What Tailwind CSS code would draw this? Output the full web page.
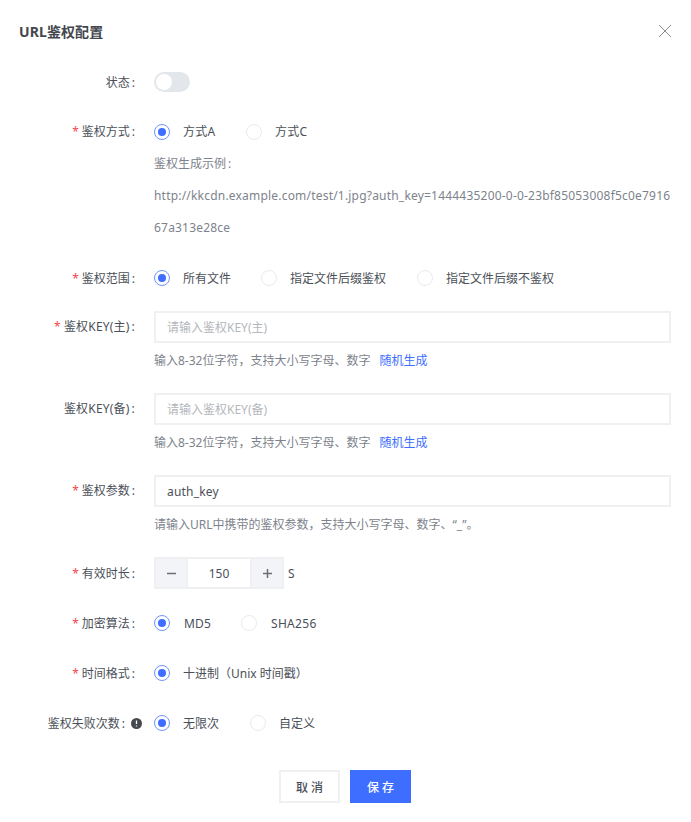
<!doctype html>
<html lang="zh-CN">
<head>
  <meta charset="UTF-8" />
  <title>URL鉴权配置</title>
  <script src="https://cdn.jsdelivr.net/npm/@tailwindcss/browser@4"></script>
</head>
<body class="bg-white">
  <main class="w-[691px] h-[822px] overflow-hidden font-['Noto_Sans','Noto_Sans_CJK_SC',sans-serif] text-[12px] text-[#4b5058]">
    <header class="h-[62px] pl-[19px] pr-[19px] flex items-center justify-between">
      <h1 class="text-[14px] font-bold text-[#43474d] tracking-[0.1px]">URL鉴权配置</h1>
      <svg class="w-[14px] h-[14px] text-[#8a8d92]" viewBox="0 0 14 14" fill="none" stroke="currentColor" stroke-width="1"><path d="M1 1l12 12M13 1L1 13" /></svg>
    </header>

    <form class="flex flex-col">
      <!-- 状态 -->
      <div class="flex items-center h-8 mt-[4px]">
        <label class="w-[135px] text-right pt-[2px]">状态<span class="ml-[2px]">:</span></label>
        <div class="ml-[19px] w-9 h-5 rounded-full bg-[#e3e6eb] p-[2px] -mt-px"><div class="w-4 h-4 rounded-full bg-white"></div></div>
      </div>

      <!-- 鉴权方式 -->
      <div class="flex items-center h-8 mt-[18px]">
        <label class="w-[135px] text-right"><span class="text-[#f0484d] mr-[3px]">*</span>鉴权方式<span class="ml-[2px]">:</span></label>
        <div class="ml-[19px] flex items-center">
          <span class="w-4 h-4 rounded-full border-[1.5px] border-[#6f93ff] flex items-center justify-center"><span class="w-2 h-2 rounded-full bg-[#3d6eff]"></span></span>
          <span class="ml-[13px] w-[63px] tracking-[0.2px]">方式A</span>
          <span class="w-4 h-4 rounded-full border-[1.5px] border-[#e8eaee]"></span>
          <span class="ml-[13px] tracking-[0.2px]">方式C</span>
        </div>
      </div>
      <div class="ml-[154px] w-[517px] text-[#7d838c] leading-8">
        <p>鉴权生成示例<span class="ml-[2px]">:</span></p>
        <p class="break-all tracking-[0.2px]">http://kkcdn.example.com/test/1.jpg?auth_key=1444435200-0-0-23bf85053008f5c0e791667a313e28ce</p>
      </div>

      <!-- 鉴权范围 -->
      <div class="flex items-center h-8 mt-[18px]">
        <label class="w-[135px] text-right pt-[2px]"><span class="text-[#f0484d] mr-[3px]">*</span>鉴权范围<span class="ml-[2px]">:</span></label>
        <div class="ml-[19px] flex items-center">
          <span class="w-4 h-4 rounded-full border-[1.5px] border-[#6f93ff] flex items-center justify-center"><span class="w-2 h-2 rounded-full bg-[#3d6eff]"></span></span>
          <span class="ml-[13px] w-[78px] pt-[2px]">所有文件</span>
          <span class="w-4 h-4 rounded-full border-[1.5px] border-[#e8eaee]"></span>
          <span class="ml-[13px] w-[127px] pt-[2px]">指定文件后缀鉴权</span>
          <span class="w-4 h-4 rounded-full border-[1.5px] border-[#e8eaee]"></span>
          <span class="ml-[13px] pt-[2px]">指定文件后缀不鉴权</span>
        </div>
      </div>

      <!-- 鉴权KEY(主) -->
      <div class="flex items-center h-8 mt-[17px]">
        <label class="w-[135px] text-right tracking-[0.2px]"><span class="text-[#f0484d] mr-[3px]">*</span>鉴权KEY(主)<span class="ml-[2px]">:</span></label>
        <input class="ml-[19px] w-[517px] h-8 px-[11px] border-2 border-[#eff0f2] outline-none placeholder:text-[#b4b7bc]" placeholder="请输入鉴权KEY(主)" />
      </div>
      <p class="ml-[154px] pt-[2px] leading-[31px] text-[#7d838c]">输入8-32位字符&#65292;支持大小写字母、数字<a class="ml-[9px] text-[#3d6eff]">随机生成</a></p>

      <!-- 鉴权KEY(备) -->
      <div class="flex items-center h-8 mt-[17px]">
        <label class="w-[135px] text-right tracking-[0.2px]">鉴权KEY(备)<span class="ml-[2px]">:</span></label>
        <input class="ml-[19px] w-[517px] h-8 px-[11px] border-2 border-[#eff0f2] outline-none placeholder:text-[#b4b7bc]" placeholder="请输入鉴权KEY(备)" />
      </div>
      <p class="ml-[154px] pt-[2px] leading-[31px] text-[#7d838c]">输入8-32位字符&#65292;支持大小写字母、数字<a class="ml-[9px] text-[#3d6eff]">随机生成</a></p>

      <!-- 鉴权参数 -->
      <div class="flex items-center h-8 mt-[17px]">
        <label class="w-[135px] text-right"><span class="text-[#f0484d] mr-[3px]">*</span>鉴权参数<span class="ml-[2px]">:</span></label>
        <input class="ml-[19px] w-[517px] h-8 px-[11px] border-2 border-[#eff0f2] outline-none text-[#4b5058] tracking-[0.2px]" value="auth_key" />
      </div>
      <p class="ml-[154px] pt-[2px] leading-[31px] text-[#7d838c]">请输入URL中携带的鉴权参数&#65292;支持大小写字母、数字、&#8220;_&#8221;。</p>

      <!-- 有效时长 -->
      <div class="flex items-center h-8 mt-[17px]">
        <label class="w-[135px] text-right pt-[2px]"><span class="text-[#f0484d] mr-[3px]">*</span>有效时长<span class="ml-[2px]">:</span></label>
        <div class="ml-[19px] flex items-stretch h-8 w-[130px] border-2 border-[#eff0f2] bg-[#f3f4f8]">
          <span class="w-[30px] flex items-center justify-center"><svg class="w-[11px] h-[11px]" viewBox="0 0 11 11" stroke="#6a6e75" stroke-width="1.5"><path d="M1 5.5h9" /></svg></span>
          <span class="flex-1 bg-white border-x-2 border-[#eff0f2] flex items-center justify-center pt-[1px]">150</span>
          <span class="w-[30px] flex items-center justify-center"><svg class="w-[11px] h-[11px]" viewBox="0 0 11 11" stroke="#6a6e75" stroke-width="1.5"><path d="M1 5.5h9M5.5 1v9" /></svg></span>
        </div>
        <span class="ml-1 pt-[2px]">S</span>
      </div>

      <!-- 加密算法 -->
      <div class="flex items-center h-8 mt-[18px]">
        <label class="w-[135px] text-right pt-[2px]"><span class="text-[#f0484d] mr-[3px]">*</span>加密算法<span class="ml-[2px]">:</span></label>
        <div class="ml-[19px] flex items-center">
          <span class="w-4 h-4 rounded-full border-[1.5px] border-[#6f93ff] flex items-center justify-center"><span class="w-2 h-2 rounded-full bg-[#3d6eff]"></span></span>
          <span class="ml-[14px] w-[57px] pt-[2px] tracking-[0.2px]">MD5</span>
          <span class="w-4 h-4 rounded-full border-[1.5px] border-[#e8eaee]"></span>
          <span class="ml-[14px] pt-[2px] tracking-[0.3px]">SHA256</span>
        </div>
      </div>

      <!-- 时间格式 -->
      <div class="flex items-center h-8 mt-[18px]">
        <label class="w-[135px] text-right pt-[2px]"><span class="text-[#f0484d] mr-[3px]">*</span>时间格式<span class="ml-[2px]">:</span></label>
        <div class="ml-[19px] flex items-center">
          <span class="w-4 h-4 rounded-full border-[1.5px] border-[#6f93ff] flex items-center justify-center"><span class="w-2 h-2 rounded-full bg-[#3d6eff]"></span></span>
          <span class="ml-[13px] pt-[2px]">十进制&#65288;Unix 时间戳&#65289;</span>
        </div>
      </div>

      <!-- 鉴权失败次数 -->
      <div class="flex items-center h-8 mt-[18px]">
        <label class="w-[125px] text-right pt-[2px]">鉴权失败次数<span class="ml-[2px]">:</span></label>
        <svg class="ml-[6px] w-[11px] h-[11px]" viewBox="0 0 11 11"><circle cx="5.5" cy="5.5" r="5.5" fill="#45484d" /><path d="M5.5 2.5v3.6M5.5 7.6v1" stroke="#fff" stroke-width="1.3" /></svg>
        <div class="ml-[12px] flex items-center">
          <span class="w-4 h-4 rounded-full border-[1.5px] border-[#6f93ff] flex items-center justify-center"><span class="w-2 h-2 rounded-full bg-[#3d6eff]"></span></span>
          <span class="ml-[13px] w-[67px] pt-[2px]">无限次</span>
          <span class="w-4 h-4 rounded-full border-[1.5px] border-[#e8eaee]"></span>
          <span class="ml-[13px] pt-[2px]">自定义</span>
        </div>
      </div>

      <!-- 底部按钮 -->
      <div class="flex justify-center gap-[10px] mt-[31px] ml-[-1px]">
        <button type="button" class="w-[61px] h-[33px] border-2 border-[#eff0f2] bg-white font-medium text-[#4b5058] pt-[2px]">取 消</button>
        <button type="button" class="w-[61px] h-[33px] bg-[#3d6eff] text-white font-medium pt-[2px]">保 存</button>
      </div>
    </form>
  </main>
</body>
</html>
